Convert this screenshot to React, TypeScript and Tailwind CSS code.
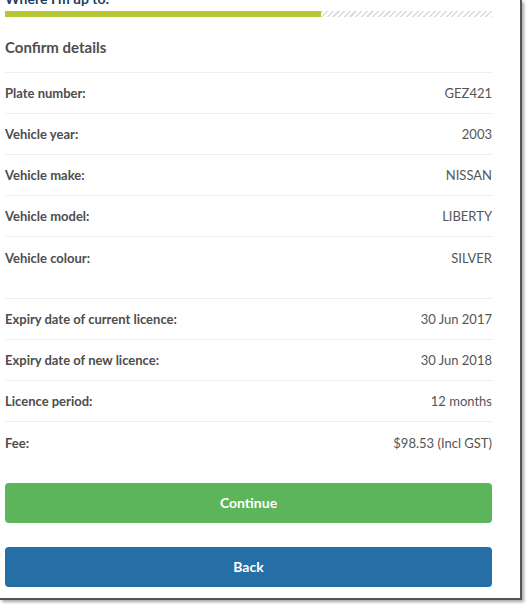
import React from "react";

const vehicle = [
  ["Plate number:", "GEZ421"],
  ["Vehicle year:", "2003"],
  ["Vehicle make:", "NISSAN"],
  ["Vehicle model:", "LIBERTY"],
  ["Vehicle colour:", "SILVER"],
];

const licence = [
  ["Expiry date of current licence:", "30 Jun 2017"],
  ["Expiry date of new licence:", "30 Jun 2018"],
  ["Licence period:", "12 months"],
  ["Fee:", "$98.53 (Incl GST)"],
];

function Row({ label, value, last }: { label: string; value: string; last?: boolean }) {
  return (
    <div
      className={
        "flex h-[41px] items-center justify-between " + (last ? "" : "border-b border-[#eeeeee]")
      }
    >
      <span className="font-bold text-[#4d4d4d]">{label}</span>
      <span className="text-[#555555]">{value}</span>
    </div>
  );
}

export default function App() {
  return (
    <div className="h-[605px] w-[527px] overflow-hidden bg-white">
      <div
        className="h-[600px] w-[522px] overflow-hidden border-r-2 border-b-2 border-[#555] bg-white shadow-[2px_2px_3px_rgba(0,0,0,0.35)] text-[13px] leading-5"
        style={{ fontFamily: "Lato, 'Open Sans', sans-serif" }}
      >
        <div className="w-[487px] pl-[5px] box-content">
          <div className="-mt-[11px] h-[20px] text-[14px] font-bold text-[#1d3f5e]">Where I'm up to:</div>
          <div className="mt-[2px] flex h-[6px]">
            <div className="w-[316px] bg-[#b5c534]" />
            <div className="flex-1 bg-[repeating-linear-gradient(135deg,#dcdcdc_0_1.5px,transparent_1.5px_4px)]" />
          </div>

          <h2 className="mt-[20px] h-[28px] text-[15px] font-bold text-[#4d4d4d] leading-5">Confirm details</h2>

          <div className="mt-[7px] border-t border-[#eeeeee]">
            {vehicle.map(([l, v], i) => (
              <Row key={l} label={l} value={v} last={i === vehicle.length - 1} />
            ))}
          </div>

          <div className="mt-[20px] border-t border-[#eeeeee]">
            {licence.map(([l, v], i) => (
              <Row key={l} label={l} value={v} last={i === licence.length - 1} />
            ))}
          </div>

          <button className="mt-[20px] flex h-[40px] w-full items-center justify-center rounded-[4px] bg-[#5cb55a] text-[14px] font-bold text-white">
            Continue
          </button>
          <button className="mt-[24px] flex h-[40px] w-full items-center justify-center rounded-[4px] bg-[#256ea6] text-[14px] font-bold text-white">
            Back
          </button>
        </div>
      </div>
    </div>
  );
}
